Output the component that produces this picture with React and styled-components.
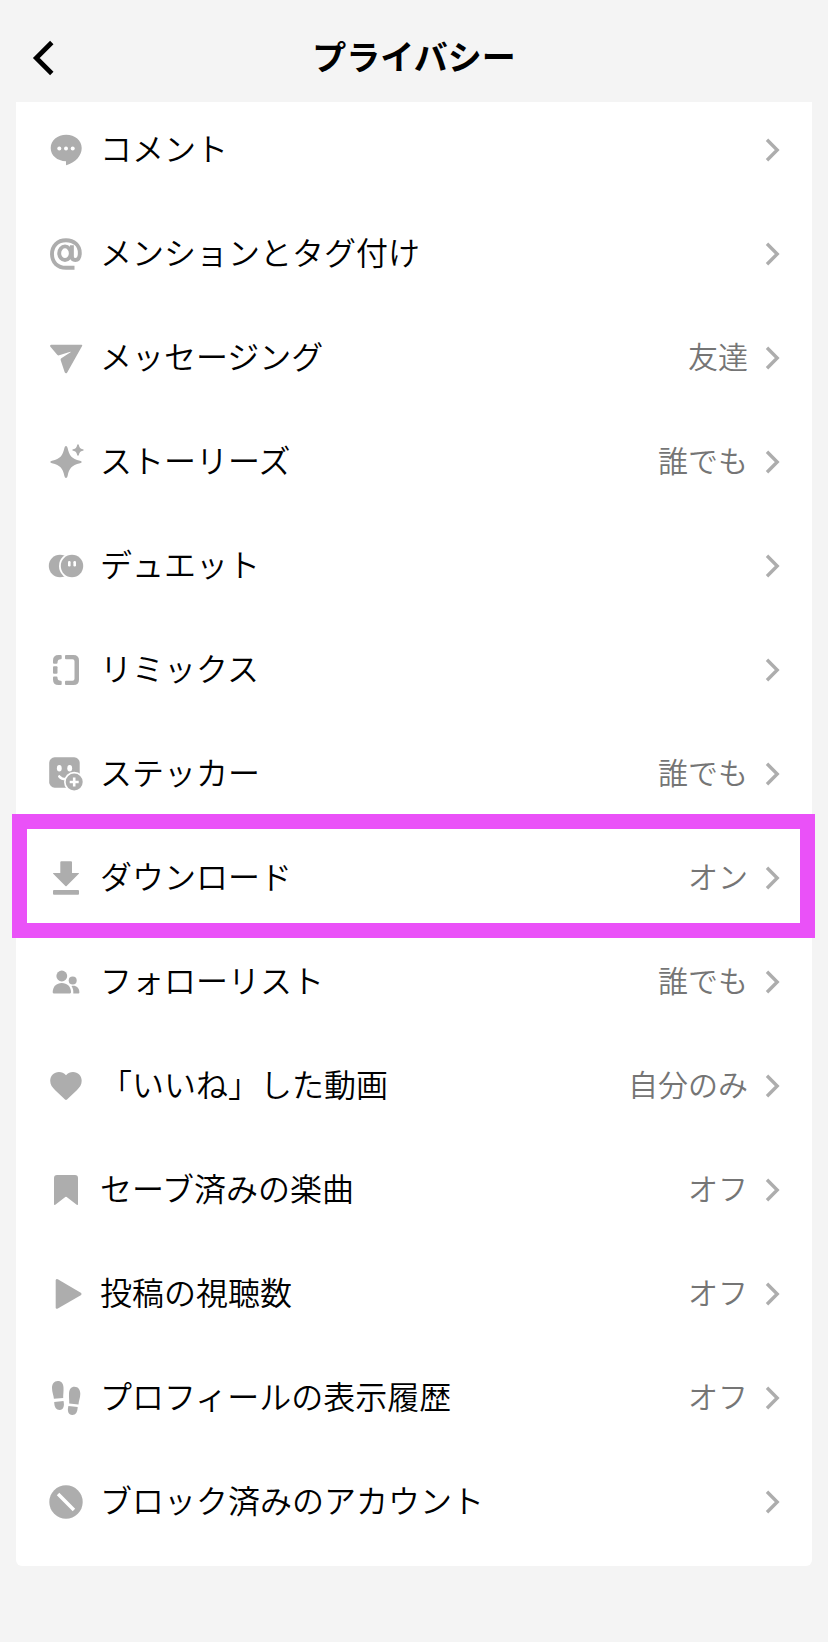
import React from "react";
import styled, { createGlobalStyle, css } from "styled-components";

const GREY = "#adadad";

const GlobalStyle = createGlobalStyle`
  *, *::before, *::after { box-sizing: border-box; }
  body {
    margin: 0;
    background: #f4f4f4;
    color: #000;
    font-family: "Noto Sans CJK JP", "Liberation Sans", sans-serif;
  }
`;

const Page = styled.div`
  min-height: 100vh;
  padding: 0 16px 76px;
`;

const Header = styled.header`
  display: grid;
  grid-template-columns: 48px 1fr 48px;
  align-items: center;
  height: 102px;
  padding-top: 14px;
`;

const BackButton = styled.button`
  display: flex;
  align-items: center;
  height: 48px;
  padding: 0 0 0 16px;
  border: 0;
  background: none;
  cursor: pointer;

  svg {
    display: block;
    flex: none;
  }
`;

const Title = styled.h1`
  margin: 0;
  padding-bottom: 4px;
  font-size: 34px;
  line-height: 48px;
  font-weight: 700;
  text-align: center;
`;

const Card = styled.ul`
  display: flex;
  flex-direction: column;
  gap: 8px;
  margin: 0;
  padding: 0 0 16px;
  list-style: none;
  background: #fff;
  border-radius: 0 0 6px 6px;
`;

const Item = styled.li`
  position: relative;

  ${({ $highlighted }) =>
    $highlighted &&
    css`
      &::after {
        content: "";
        position: absolute;
        inset: -16px -3px -12px -4px;
        border: 15px solid #ea51f8;
        pointer-events: none;
      }
    `}
`;

const RowButton = styled.button`
  display: flex;
  align-items: center;
  width: 100%;
  height: 96px;
  padding: 0 32px;
  border: 0;
  background: none;
  color: inherit;
  font: inherit;
  font-weight: 350;
  text-align: left;
  cursor: pointer;
`;

const IconSvg = styled.svg`
  display: block;
  flex: none;
  width: 36px;
  height: 36px;
  overflow: visible;
  fill: ${GREY};
`;

const Label = styled.span`
  flex: 1;
  margin-left: 16px;
  padding-bottom: 6px;
  font-size: 32px;
  line-height: 48px;
`;

const Value = styled.span`
  padding-bottom: 6px;
  font-size: 30px;
  line-height: 48px;
  color: #757575;
`;

const ChevronSvg = styled.svg`
  display: block;
  flex: none;
  width: 16px;
  height: 26px;
  margin-left: 16px;
  fill: none;
  stroke: ${GREY};
  stroke-width: 3.4;
`;

const icons = {
  comment: (
    <>
      <path d="M18 29.2C9.2 29 2.7 23.5 2.7 16 2.7 8.600 9.500 2.800 18.200 2.800S33.700 8.600 33.700 16C33.700 24 27.500 30 19 33.100Q18 33.400 18 32.400Z" />
      <g fill="#fff">
        <circle cx="11.3" cy="16.4" r="2" />
        <circle cx="18" cy="16.400" r="2" />
        <circle cx="24.700" cy="16.400" r="2" />
      </g>
    </>
  ),
  mention: (
    <g fill="none" stroke={GREY} strokeWidth="3.9">
      <ellipse cx="17" cy="17.200" rx="5.800" ry="6.800" />
      <path d="M23.900 9.200V20.500Q23.900 24 27.300 24C30.400 24 31.800 21.500 31.800 17C31.800 9 26 4.200 18 4.200C9.500 4.200 4 9.800 4 18C4 26.500 9.500 31.700 18 31.700H26.500" />
    </g>
  ),
  message: (
    <path d="M3 4.800H33.400Q34.800 4.800 34.100 6.100L19.200 32.400Q17.900 34.400 16.700 32.200L12.700 20.200Q12.300 19 13.300 18.300L22.600 12.200Q23 11.700 22.400 11.700L11.200 15.300Q10 15.600 9.200 14.700L2.200 6.500Q1.500 5.200 3 4.800Z" />
  ),
  sparkle: (
    <>
      <path d="M18 2Q19.200 2 19.600 4C21.200 11.500 23.500 14.700 32 16.700Q33.700 17.200 33.700 18T32 19.300C23.500 21.300 21.200 24.500 19.600 32Q19.200 34 18 34T16.400 32C14.800 24.500 12.500 21.300 4 19.300Q2.300 18.800 2.300 18T4 16.700C12.500 14.700 14.800 11.500 16.400 4Q16.800 2 18 2Z" />
      <path d="M30 .2Q30.700.2 30.900 1.200C31.400 3.700 32.300 4.600 34.800 5.200Q35.700 5.500 35.700 6T34.800 6.800C32.300 7.400 31.400 8.300 30.900 10.800Q30.700 11.800 30 11.800T29.100 10.800C28.600 8.300 27.700 7.400 25.200 6.800Q24.300 6.500 24.300 6T25.200 5.200C27.700 4.600 28.600 3.700 29.100 1.200Q29.300.2 30 .2Z" />
    </>
  ),
  duet: (
    <>
      <circle cx="12" cy="18" r="11.200" />
      <circle cx="24" cy="18" r="13" fill="#fff" />
      <circle cx="24" cy="18" r="11.200" />
      <rect x="20" y="13" width="2.600" height="5.400" rx="1.200" fill="#fff" />
      <rect x="25.400" y="13" width="2.600" height="5.400" rx="1.200" fill="#fff" />
    </>
  ),
  remix: (
    <>
      <path d="M18 3H25.500Q31 3 31 8.500V27.500Q31 33 25.500 33H18Q17 33 17 32V29.700Q17 28.700 18 28.700H24.500Q26.500 28.700 26.500 26.700V9.300Q26.500 7.300 24.500 7.300H18Q17 7.300 17 6.300V4Q17 3 18 3Z" />
      <path d="M12.700 3Q13.700 3 13.700 4V6.300Q13.700 7.300 12.700 7.300Q9.500 7.300 9.500 10.700Q9.500 11.700 8.500 11.700H6Q5 11.700 5 10.700V8.500Q5 3 10.500 3Z" />
      <rect x="5" y="14.300" width="4.500" height="7.500" rx="1" />
      <path d="M12.700 33Q13.700 33 13.700 32V29.700Q13.700 28.700 12.700 28.700Q9.500 28.700 9.500 25.500Q9.500 24.500 8.500 24.500H6Q5 24.500 5 25.500V27.500Q5 33 10.500 33Z" />
    </>
  ),
  sticker: (
    <>
      <rect x="1.200" y="1.300" width="30.500" height="30.400" rx="5.500" />
      <g fill="#fff">
        <ellipse cx="11.300" cy="12.200" rx="2.400" ry="3.300" />
        <ellipse cx="21.700" cy="12.200" rx="2.400" ry="3.300" />
        <circle cx="26.200" cy="26" r="10.200" />
      </g>
      <path d="M11.300 20.500Q13.500 23.200 18 23.200" fill="none" stroke="#fff" strokeWidth="2.600" strokeLinecap="round" />
      <circle cx="26.200" cy="26" r="8.500" />
      <path d="M26.200 21.500V30.500M21.700 26H30.700" stroke="#fff" strokeWidth="2.600" />
    </>
  ),
  download: (
    <>
      <path d="M13.300 1.300H23Q24 1.300 24 2.300V13H30.500Q31.500 13 30.800 13.800L18.600 25.900Q18 26.500 17.400 25.900L5.200 13.800Q4.500 13 5.500 13H12.300V2.300Q12.300 1.300 13.300 1.300Z" />
      <rect x="5" y="30" width="26" height="4.700" rx="1" />
    </>
  ),
  followers: (
    <>
      <circle cx="13.800" cy="12" r="5.400" />
      <path d="M4.700 28.300C4.700 22.500 8.500 19 13.800 19S23 22.500 23 28.300Q23 29.400 22 29.400H5.700Q4.700 29.400 4.700 28.300Z" />
      <circle cx="24.700" cy="16.400" r="4" />
      <path d="M23.500 22C28 21.200 31.400 23.700 31.400 28.400Q31.400 29.400 30.400 29.400H25.300C25.500 26.500 25 24.200 23.500 22Z" />
    </>
  ),
  heart: (
    <path d="M18 7.200C20 4.800 22.300 3.900 25 3.900C30 3.900 33.700 7.800 33.700 12.700C33.700 16.800 31.700 19.300 28.800 22.200L19 31.600Q18 32.500 17 31.600L7.200 22.200C4.300 19.300 2.200 16.800 2.200 12.700C2.200 7.800 6 3.900 11 3.900C13.700 3.900 16 4.800 18 7.200Z" />
  ),
  bookmark: (
    <path d="M9 3H27Q30 3 30 6V32Q30 33.500 28.700 32.700L18.700 25Q18 24.400 17.300 25L7.300 32.700Q6 33.500 6 32V6Q6 3 9 3Z" />
  ),
  play: (
    <path d="M7.700 4.500Q7.700 2.300 9.800 3.300L32.800 16.700Q34.600 18 32.800 19.300L9.800 32.500Q7.700 33.500 7.700 31.300Z" />
  ),
  footprints: (
    <>
      <path d="M9.800 1C13.500 1 15.300 3.500 15.500 7.500C15.700 12 15.100 14.500 15.200 18L5.900 18.700C5.700 15.500 4 12.500 4 8C4 4 6 1 9.800 1Z" />
      <path d="M6.200 21.900L15.500 20.900C16.700 26 15.300 29.700 11.800 29.900C8.200 30 6.300 27.200 6.200 21.900Z" />
      <path d="M26.500 6.700C30.200 6.700 32.300 9.500 32.300 13.700C32.300 18 30.700 20.800 30.500 24.400L21.200 23.600C21.400 20.300 20.800 18 21 13.500C21.200 9.300 23 6.700 26.500 6.700Z" />
      <path d="M20.400 26L29.700 27C29.500 32.200 27.800 35.100 24.200 35C20.500 34.900 19 31.200 20.400 26Z" />
    </>
  ),
  blocked: (
    <>
      <circle cx="18" cy="18" r="16.700" />
      <path d="M11.300 11.300L24.700 24.700" stroke="#fff" strokeWidth="3.500" strokeLinecap="square" />
    </>
  ),
};

const settings = [
  { icon: "comment", label: "コメント" },
  { icon: "mention", label: "メンションとタグ付け" },
  { icon: "message", label: "メッセージング", value: "友達" },
  { icon: "sparkle", label: "ストーリーズ", value: "誰でも" },
  { icon: "duet", label: "デュエット" },
  { icon: "remix", label: "リミックス" },
  { icon: "sticker", label: "ステッカー", value: "誰でも" },
  { icon: "download", label: "ダウンロード", value: "オン", highlighted: true },
  { icon: "followers", label: "フォローリスト", value: "誰でも" },
  { icon: "heart", label: "「いいね」した動画", value: "自分のみ" },
  { icon: "bookmark", label: "セーブ済みの楽曲", value: "オフ" },
  { icon: "play", label: "投稿の視聴数", value: "オフ" },
  { icon: "footprints", label: "プロフィールの表示履歴", value: "オフ" },
  { icon: "blocked", label: "ブロック済みのアカウント" },
];

function SettingRow({ icon, label, value, highlighted }) {
  return (
    <Item $highlighted={highlighted}>
      <RowButton type="button">
        <IconSvg viewBox="0 0 36 36" aria-hidden="true">
          {icons[icon]}
        </IconSvg>
        <Label>{label}</Label>
        {value && <Value>{value}</Value>}
        <ChevronSvg viewBox="0 0 16 26" aria-hidden="true">
          <path d="M3 2.800L13.200 13L3 23.200" />
        </ChevronSvg>
      </RowButton>
    </Item>
  );
}

export default function App() {
  return (
    <>
      <GlobalStyle />
      <Page>
        <Header>
          <BackButton type="button" aria-label="戻る">
            <svg width="24" height="36" viewBox="0 0 24 36" fill="none" stroke="#000" strokeWidth="4.800" aria-hidden="true">
              <path d="M19.800 2.500L4.300 18L19.800 33.500" />
            </svg>
          </BackButton>
          <Title>プライバシー</Title>
        </Header>
        <Card>
          {settings.map((setting) => (
            <SettingRow key={setting.label} {...setting} />
          ))}
        </Card>
      </Page>
    </>
  );
}
